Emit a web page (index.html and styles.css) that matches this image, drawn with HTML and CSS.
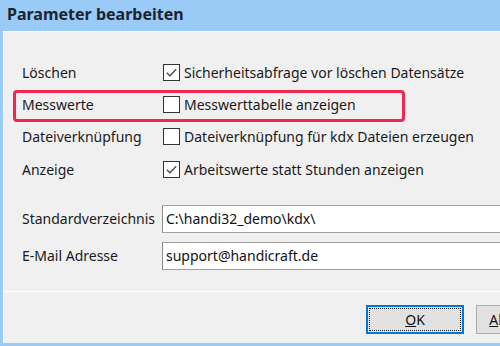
FILE: index.html
```html
<!DOCTYPE html>
<html lang="de">
<head>
  <meta charset="UTF-8" />
  <meta name="viewport" content="width=device-width, initial-scale=1.0" />
  <title>Parameter bearbeiten</title>
  <link rel="stylesheet" href="styles.css">
</head>
<body>
  <div class="window">
    <div class="titlebar">Parameter bearbeiten</div>

    <div class="client">
      <div class="form">
        <div class="row">
          <span class="label">Löschen</span>
          <label class="check">
            <span class="box"><svg viewBox="0 0 16 16" width="16" height="16"><path d="M3 8.2 L6.3 11.5 L13 4.5" fill="none" stroke="#4a4a4a" stroke-width="1.4"/></svg></span>
            Sicherheitsabfrage vor löschen Datensätze
          </label>
        </div>
        <div class="row highlight">
          <span class="label">Messwerte</span>
          <label class="check">
            <span class="box"></span>
            Messwerttabelle anzeigen
          </label>
        </div>
        <div class="row">
          <span class="label">Dateiverknüpfung</span>
          <label class="check">
            <span class="box"></span>
            Dateiverknüpfung für kdx Dateien erzeugen
          </label>
        </div>
        <div class="row">
          <span class="label">Anzeige</span>
          <label class="check">
            <span class="box"><svg viewBox="0 0 16 16" width="16" height="16"><path d="M3 8.2 L6.3 11.5 L13 4.5" fill="none" stroke="#4a4a4a" stroke-width="1.4"/></svg></span>
            Arbeitswerte statt Stunden anzeigen
          </label>
        </div>

        <div class="field first">
          <span class="label">Standardverzeichnis</span>
          <input type="text" value="C:\handi32_demo\kdx\" />
        </div>
        <div class="field">
          <span class="label">E-Mail Adresse</span>
          <input type="text" value="support@handicraft.de" />
        </div>
      </div>

      <div class="footer">
        <button class="btn default"><span class="focus"><u>O</u>K</span></button>
        <button class="btn"><u>A</u>bbrechen</button>
      </div>
    </div>
  </div>
</body>
</html>
```

FILE: styles.css
```css
html, body {
  margin: 0;
  padding: 0;
  height: 100%;
}
body {
  font-family: "Noto Sans", "Open Sans", sans-serif;
  font-size: 14px;
  color: #1a1a1a;
  background: #f0f0f0;
  overflow: hidden;
}
.window {
  width: 620px;
  height: 346px;
  box-sizing: border-box;
  background: #99cbf6;
  padding: 0 3px 3px 3px;
  display: flex;
  flex-direction: column;
}
.titlebar {
  height: 31px;
  line-height: 29px;
  padding-left: 4px;
  font-weight: bold;
  font-size: 16px;
  color: #1b2430;
}
.client {
  flex: 1;
  background: #f0f0f0;
  border-left: 1px solid #fff;
  border-top: 1px solid #fbfbfb;
  display: flex;
  flex-direction: column;
}
.form {
  flex: 1;
  padding: 24px 0 0 18px;
}
.row {
  height: 32.4px;
  display: flex;
  align-items: center;
  position: relative;
}
.label {
  width: 141px;
  flex-shrink: 0;
}
.check {
  display: flex;
  align-items: center;
  gap: 4px;
}
.box {
  width: 15px;
  height: 15px;
  border: 1px solid #333;
  background: #fff;
  display: flex;
  align-items: center;
  justify-content: center;
}
.box svg {
  width: 15px;
  height: 15px;
}
.highlight::after {
  content: "";
  position: absolute;
  left: -9px;
  width: 386px;
  top: 2px;
  height: 26px;
  border: 3px solid #f0284f;
  border-radius: 4px;
}
.field {
  height: 28px;
  display: flex;
  align-items: center;
  margin-top: 9px;
}
.field.first {
  margin-top: 19px;
}
.field .label {
  width: 140px;
}
.field input {
  width: 420px;
  height: 28px;
  box-sizing: border-box;
  border: 1px solid #8c8c8c;
  border-top-color: #a0a0a0;
  border-bottom-color: #a0a0a0;
  padding: 0 3px;
  font-family: inherit;
  font-size: 14px;
  color: #111;
  background: #fff;
}
.footer {
  height: 52px;
  border-top: 1px solid #fff;
  display: flex;
  gap: 12px;
  padding: 13px 0 0 362px;
  box-sizing: border-box;
}
.btn {
  width: 98px;
  height: 29px;
  box-sizing: border-box;
  background: #e1e1e1;
  border: 1px solid #adadad;
  font-family: inherit;
  font-size: 14px;
  color: #111;
  padding: 0;
}
.btn.default {
  border: 2px solid #0078d7;
  padding: 1px;
}
.btn .focus {
  display: flex;
  align-items: center;
  justify-content: center;
  height: 100%;
  border: 1px dotted #222;
  box-sizing: border-box;
}
```
